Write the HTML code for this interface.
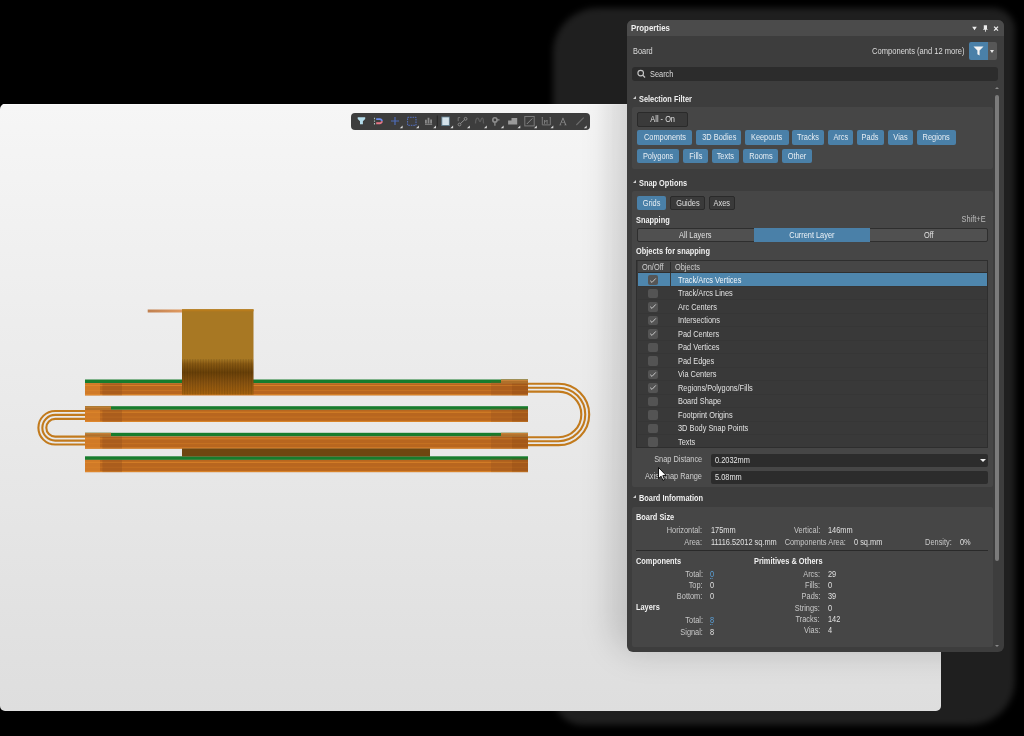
<!DOCTYPE html>
<html><head><meta charset="utf-8">
<style>
html,body{margin:0;padding:0;}
body{width:1024px;height:736px;overflow:hidden;position:relative;background:#000;font-family:"Liberation Sans",sans-serif;}
.a{position:absolute;}
#board{left:0;top:104px;width:941px;height:607px;border-radius:5px;background:linear-gradient(180deg,#f6f6f6 0%,#ececec 40%,#dedede 100%);overflow:hidden;}
#boardshade{left:612px;top:-40px;width:440px;height:590px;border-radius:30px;background:rgba(0,0,0,.15);filter:blur(15px);}
#pshadow{left:553px;top:8px;width:462px;height:717px;border-radius:45px 22px 45px 30px;background:#1f1f1f;filter:blur(3px);}
#panel{left:627px;top:20px;width:377px;height:632px;border-radius:6px;background:#3d3d3d;overflow:hidden;color:#dcdcdc;font-size:8.8px;}
.t{position:absolute;white-space:nowrap;line-height:10px;transform-origin:0 50%;}
.b{font-weight:bold;color:#f0f0f0;}
</style></head><body>
<div id="pshadow" class="a"></div>
<div id="board" class="a"><div class="a" style="left:0;top:0;width:941px;height:1px;background:#fcfcfc"></div><div id="boardshade" class="a"></div></div>
<svg class="a" style="left:0;top:0" width="1024" height="736" viewBox="0 0 1024 736">
<defs><linearGradient id="fg" x1="0" y1="0" x2="0" y2="1"><stop offset="0" stop-color="#a87823"/><stop offset=".587" stop-color="#a87823"/><stop offset=".64" stop-color="#8a5a12"/><stop offset=".74" stop-color="#6c4208"/><stop offset=".86" stop-color="#8a5410"/><stop offset="1" stop-color="#a8640e"/></linearGradient><linearGradient id="tl" x1="0" y1="0" x2="1" y2="0"><stop offset="0" stop-color="#c08050"/><stop offset="1" stop-color="#e09a60"/></linearGradient><pattern id="vs" width="1.6" height="10" patternUnits="userSpaceOnUse"><rect width=".8" height="10" fill="#000" opacity=".13"/></pattern></defs>
<rect x="147.7" y="309.5" width="34.5" height="3" fill="url(#tl)"/>
<rect x="85" y="379.5" width="443" height="3.6" fill="#177c2d"/>
<rect x="85" y="383.1" width="443" height="12.2" fill="#b8661f"/>
<rect x="85" y="385.0" width="443" height="1" fill="#e08a2a" opacity=".8"/>
<rect x="85" y="390.0" width="443" height=".8" fill="#d07a25" opacity=".7"/>
<rect x="85" y="394.1" width="443" height="1.2" fill="#d9842a"/>
<rect x="85" y="383.1" width="15" height="12.2" fill="#e48a2e" opacity=".55"/>
<rect x="102.4" y="383.1" width="19.6" height="12.2" fill="#8a4a1a" opacity=".3"/>
<rect x="491" y="381.5" width="21" height="13.8" fill="#8a4a1a" opacity=".25"/>
<rect x="512" y="381.5" width="16" height="13.8" fill="#7a3e10" opacity=".35"/>
<rect x="85" y="406.2" width="443" height="3.6" fill="#177c2d"/>
<rect x="85" y="409.8" width="443" height="12.2" fill="#b8661f"/>
<rect x="85" y="411.7" width="443" height="1" fill="#e08a2a" opacity=".8"/>
<rect x="85" y="416.7" width="443" height=".8" fill="#d07a25" opacity=".7"/>
<rect x="85" y="420.8" width="443" height="1.2" fill="#d9842a"/>
<rect x="85" y="409.8" width="15" height="12.2" fill="#e48a2e" opacity=".55"/>
<rect x="102.4" y="409.8" width="19.6" height="12.2" fill="#8a4a1a" opacity=".3"/>
<rect x="491" y="408.2" width="21" height="13.8" fill="#8a4a1a" opacity=".25"/>
<rect x="512" y="408.2" width="16" height="13.8" fill="#7a3e10" opacity=".35"/>
<rect x="85" y="432.8" width="443" height="3.6" fill="#177c2d"/>
<rect x="85" y="436.40000000000003" width="443" height="12.2" fill="#b8661f"/>
<rect x="85" y="438.3" width="443" height="1" fill="#e08a2a" opacity=".8"/>
<rect x="85" y="443.3" width="443" height=".8" fill="#d07a25" opacity=".7"/>
<rect x="85" y="447.40000000000003" width="443" height="1.2" fill="#d9842a"/>
<rect x="85" y="436.40000000000003" width="15" height="12.2" fill="#e48a2e" opacity=".55"/>
<rect x="102.4" y="436.40000000000003" width="19.6" height="12.2" fill="#8a4a1a" opacity=".3"/>
<rect x="491" y="434.8" width="21" height="13.8" fill="#8a4a1a" opacity=".25"/>
<rect x="512" y="434.8" width="16" height="13.8" fill="#7a3e10" opacity=".35"/>
<rect x="85" y="456.3" width="443" height="3.6" fill="#177c2d"/>
<rect x="85" y="459.90000000000003" width="443" height="12.2" fill="#b8661f"/>
<rect x="85" y="461.8" width="443" height="1" fill="#e08a2a" opacity=".8"/>
<rect x="85" y="466.8" width="443" height=".8" fill="#d07a25" opacity=".7"/>
<rect x="85" y="470.90000000000003" width="443" height="1.2" fill="#d9842a"/>
<rect x="85" y="459.90000000000003" width="15" height="12.2" fill="#e48a2e" opacity=".55"/>
<rect x="102.4" y="459.90000000000003" width="19.6" height="12.2" fill="#8a4a1a" opacity=".3"/>
<rect x="491" y="458.3" width="21" height="13.8" fill="#8a4a1a" opacity=".25"/>
<rect x="512" y="458.3" width="16" height="13.8" fill="#7a3e10" opacity=".35"/>
<rect x="182" y="309.3" width="71.5" height="85.3" fill="url(#fg)"/>
<rect x="182" y="309.3" width="71.5" height="2" fill="#b87c1c"/>
<rect x="182" y="359" width="71.5" height="35.6" fill="url(#vs)"/>
<rect x="182" y="448.5" width="248" height="8" fill="#6e4610"/>
<rect x="85" y="406.2" width="26" height="3.8" fill="#b0702a"/>
<rect x="85" y="406.5" width="26" height="1.2" fill="#d08a40" opacity=".7"/>
<rect x="85" y="432.8" width="26" height="3.8" fill="#b0702a"/>
<rect x="85" y="433.1" width="26" height="1.2" fill="#d08a40" opacity=".7"/>
<rect x="501" y="379.5" width="27" height="3.8" fill="#b0702a"/>
<rect x="501" y="379.8" width="27" height="1.2" fill="#d08a40" opacity=".7"/>
<rect x="501" y="432.8" width="27" height="3.8" fill="#b0702a"/>
<rect x="501" y="433.1" width="27" height="1.2" fill="#d08a40" opacity=".7"/>
<path d="M528 383.75 H558.5 A30.7 30.7 0 0 1 558.5 445.15 H528" stroke="#c27a1c" stroke-width="2.1" fill="none"/>
<path d="M528 387.7 H558.5 A26.75 26.75 0 0 1 558.5 441.2 H528" stroke="#c27a1c" stroke-width="2.1" fill="none"/>
<path d="M528 391.65 H558.5 A22.799999999999997 22.799999999999997 0 0 1 558.5 437.25 H528" stroke="#c27a1c" stroke-width="2.1" fill="none"/>
<path d="M85 410.95 H55.2 A16.8 16.8 0 0 0 55.2 444.55 H85" stroke="#c27a1c" stroke-width="2.1" fill="none"/>
<path d="M85 414.9 H55.2 A12.850000000000001 12.850000000000001 0 0 0 55.2 440.6 H85" stroke="#c27a1c" stroke-width="2.1" fill="none"/>
<path d="M85 418.85 H55.2 A8.9 8.9 0 0 0 55.2 436.65 H85" stroke="#c27a1c" stroke-width="2.1" fill="none"/>
</svg>
<div class="a" style="left:351px;top:113px;width:239px;height:16.5px;background:#3d3d3d;border-radius:4px;"></div>
<svg class="a" style="left:0;top:0" width="1024" height="736" viewBox="0 0 1024 736"><defs><filter id="gl"><feGaussianBlur stdDeviation=".6"/></filter></defs><path d="M357.7 117.3h7.5v1.6l-2.3 2.4v3h-2.9v-3l-2.3-2.4z" fill="#b4dcea"/><path d="M376.2 119.1h3.6a2.05 2.05 0 0 1 2.05 2.05" stroke="#6a8ae8" stroke-width="1.9" fill="none"/><path d="M381.85 121.15a2.05 2.05 0 0 1 -2.05 2.05h-3.6" stroke="#e67686" stroke-width="1.9" fill="none"/><path d="M374.5 117.8v1.4M374.5 120.4v1.4M374.5 123v1.4" stroke="#a8c0b8" stroke-width="1.1"/><path d="M391 121h8M395 117v8" stroke="#4e6cb8" stroke-width="1.2"/><rect x="407.6" y="117.3" width="8.4" height="8" stroke="#5470c0" stroke-width="1" fill="none" stroke-dasharray="1.6 .9"/><path d="M425 124.3h7.2" stroke="#8a8a8a" stroke-width="1"/><path d="M425.9 123.4v-3.6M428.5 123.4v-5.6M431.1 123.4v-4" stroke="#8a8a8a" stroke-width="1.8"/><path d="M437.3 115.5v11" stroke="#262626" stroke-width="1"/><rect x="441.3" y="116.6" width="8.5" height="9.3" fill="#7fb0cc" opacity=".6" filter="url(#gl)"/><rect x="442.3" y="117.4" width="6.6" height="7.6" fill="#d4e2ea"/><path d="M460.4 123.6l4.3-4" stroke="#8a8a8a" stroke-width="1"/><circle cx="459.5" cy="124.5" r="1.4" stroke="#8a8a8a" fill="none"/><circle cx="465.6" cy="118.8" r="1.4" stroke="#8a8a8a" fill="none"/><path d="M458.2 121.2v-3.6h2" stroke="#7a7a7a" stroke-width=".9" fill="none"/><path d="M475.5 123.5c0-4 1.2-5.3 2.3-5.3s1.3 3.5 2.2 3.5 1.1-3.5 2.2-3.5 1.3 1.8 1.3 5.3" stroke="#5c5c5c" stroke-width="1.3" fill="none"/><circle cx="494.9" cy="119.9" r="2.1" fill="none" stroke="#8e8e8e" stroke-width="1.6"/><path d="M494.9 122v3.8M497 119.9h2.5" stroke="#8e8e8e" stroke-width="1.3"/><path d="M508.1 124.6v-4.1h3.4v-2.6h5.7v6.7z" fill="#9a9a9a"/><rect x="524.8" y="116.5" width="9.4" height="9.4" fill="none" stroke="#7a7a7a" stroke-width="1"/><path d="M526.8 124l5.5-5.5" stroke="#8a8a8a" stroke-width="1"/><path d="M542.3 117.6v7.3h8v-7.3M544.5 123.8v-3.8l1.3 1.6 1.3-1.6v3.8" stroke="#7a7a7a" stroke-width="1" fill="none"/><path d="M541.7 117.6h1.3M549.6 117.6h1.3" stroke="#7a7a7a" stroke-width="1"/><path d="M559.2 125.3h2.2v-.5h-.8l.8-2.2h2.9l.8 2.2h-.8v.5h2.4v-.5h-.5l-2.9-7.1h-.7l-2.8 7.1h-.6z M561.9 121.9l1.1-3 1.1 3z" fill="#8c8c8c" fill-rule="evenodd"/><path d="M576.3 125l7.4-7.4" stroke="#6c6c6c" stroke-width="1.1"/><path d="M399.8 128.3h2.8v-2.8z" fill="#d8d8d8"/><path d="M416.1 128.3h2.8v-2.8z" fill="#d8d8d8"/><path d="M433.2 128.3h2.8v-2.8z" fill="#d8d8d8"/><path d="M450.3 128.3h2.8v-2.8z" fill="#d8d8d8"/><path d="M467.0 128.3h2.8v-2.8z" fill="#d8d8d8"/><path d="M484.0 128.3h2.8v-2.8z" fill="#d8d8d8"/><path d="M500.8 128.3h2.8v-2.8z" fill="#d8d8d8"/><path d="M517.5 128.3h2.8v-2.8z" fill="#d8d8d8"/><path d="M534.0 128.3h2.8v-2.8z" fill="#d8d8d8"/><path d="M550.5 128.3h2.8v-2.8z" fill="#d8d8d8"/><path d="M583.9 128.3h2.8v-2.8z" fill="#d8d8d8"/></svg>
<div id="panel" class="a">
<div class="a" style="left:0.00px;top:0.00px;width:377.00px;height:16.00px;background:#4b4b4b;"></div>
<div class="t b" style="top:3.43px;font-size:9.6px;transform:scaleX(0.82);left:4.00px;">Properties</div>
<svg class="a" style="left:343px;top:4px" width="32" height="10" viewBox="970 24 32 10"><path d="M972.2 26.8h4.6l-2.3 3.4z" fill="#ececec"/><path d="M983.8 25.2h3.2v3.6l.9.9h-2.1v2h-.8v-2h-2.1l.9-.9z" fill="#ececec"/><path d="M994.1 26.6l3.9 4M998 26.6l-3.9 4" stroke="#ececec" stroke-width="1.3"/></svg>
<div class="t " style="top:26.39px;font-size:8.8px;transform:scaleX(0.84);left:6.00px;">Board</div>
<div class="t " style="top:26.39px;font-size:8.8px;transform:scaleX(0.86);right:39.50px;transform-origin:100% 50%;">Components (and 12 more)</div>
<div class="a" style="left:342.00px;top:22.30px;width:19.00px;height:17.70px;background:#4a80a8;border-radius:2px 0 0 2px;"></div>
<svg class="a" style="left:346px;top:26px" width="11" height="10" viewBox="0 0 11 10"><path d="M0.5 0.5h10L6.6 4.6V9.5L4.4 8.3V4.6z" fill="#f4f4f4"/></svg>
<div class="a" style="left:361.00px;top:22.30px;width:9.00px;height:17.70px;background:#575757;border-radius:0 2px 2px 0;"></div>
<div class="a" style="left:363px;top:30px;width:0;height:0;border-left:2.5px solid transparent;border-right:2.5px solid transparent;border-top:3px solid #e8e8e8;"></div>
<div class="a" style="left:5.00px;top:46.80px;width:366.00px;height:14.20px;background:#2c2c2c;border-radius:3px;"></div>
<svg class="a" style="left:9px;top:49px" width="10" height="10" viewBox="0 0 10 10"><circle cx="4.7" cy="4.1" r="2.8" stroke="#c4c4c4" stroke-width="1.15" fill="none"/><path d="M6.7 6.1L9 8.5" stroke="#c4c4c4" stroke-width="1.3"/></svg>
<div class="t " style="top:48.89px;font-size:8.8px;transform:scaleX(0.84);left:23.00px;">Search</div>
<div class="a" style="left:6px;top:76.30px;width:0;height:0;border-left:3.5px solid transparent;border-bottom:3.5px solid #d0d0d0;"></div>
<div class="t b" style="top:74.39px;font-size:8.8px;transform:scaleX(0.84);left:11.70px;">Selection Filter</div>
<div class="a" style="left:5.00px;top:86.70px;width:360.50px;height:62.50px;background:#464646;border-radius:2px;"></div>
<div class="a" style="left:10.00px;top:91.50px;width:50.50px;height:15.00px;background:#3a3a3a;border:1px solid #2a2a2a;box-sizing:border-box;border-radius:2px;"></div>
<div class="a" style="left:10.00px;top:91.50px;width:50.50px;height:15.00px;line-height:15.00px;text-align:center;color:#e0e0e0;font-size:8.8px;"><span style="display:inline-block;transform:scaleX(0.84);white-space:nowrap">All - On</span></div>
<div class="a" style="left:10.00px;top:110.40px;width:55.00px;height:14.30px;background:#4a80a8;border-radius:2px;"></div>
<div class="a" style="left:10.00px;top:110.40px;width:55.00px;height:14.30px;line-height:14.30px;text-align:center;color:#e8eef4;font-size:8.8px;"><span style="display:inline-block;transform:scaleX(0.84);white-space:nowrap">Components</span></div>
<div class="a" style="left:69.30px;top:110.40px;width:45.00px;height:14.30px;background:#4a80a8;border-radius:2px;"></div>
<div class="a" style="left:69.30px;top:110.40px;width:45.00px;height:14.30px;line-height:14.30px;text-align:center;color:#e8eef4;font-size:8.8px;"><span style="display:inline-block;transform:scaleX(0.84);white-space:nowrap">3D Bodies</span></div>
<div class="a" style="left:118.00px;top:110.40px;width:43.50px;height:14.30px;background:#4a80a8;border-radius:2px;"></div>
<div class="a" style="left:118.00px;top:110.40px;width:43.50px;height:14.30px;line-height:14.30px;text-align:center;color:#e8eef4;font-size:8.8px;"><span style="display:inline-block;transform:scaleX(0.84);white-space:nowrap">Keepouts</span></div>
<div class="a" style="left:165.40px;top:110.40px;width:31.60px;height:14.30px;background:#4a80a8;border-radius:2px;"></div>
<div class="a" style="left:165.40px;top:110.40px;width:31.60px;height:14.30px;line-height:14.30px;text-align:center;color:#e8eef4;font-size:8.8px;"><span style="display:inline-block;transform:scaleX(0.84);white-space:nowrap">Tracks</span></div>
<div class="a" style="left:201.10px;top:110.40px;width:24.80px;height:14.30px;background:#4a80a8;border-radius:2px;"></div>
<div class="a" style="left:201.10px;top:110.40px;width:24.80px;height:14.30px;line-height:14.30px;text-align:center;color:#e8eef4;font-size:8.8px;"><span style="display:inline-block;transform:scaleX(0.84);white-space:nowrap">Arcs</span></div>
<div class="a" style="left:230.00px;top:110.40px;width:27.00px;height:14.30px;background:#4a80a8;border-radius:2px;"></div>
<div class="a" style="left:230.00px;top:110.40px;width:27.00px;height:14.30px;line-height:14.30px;text-align:center;color:#e8eef4;font-size:8.8px;"><span style="display:inline-block;transform:scaleX(0.84);white-space:nowrap">Pads</span></div>
<div class="a" style="left:261.20px;top:110.40px;width:24.60px;height:14.30px;background:#4a80a8;border-radius:2px;"></div>
<div class="a" style="left:261.20px;top:110.40px;width:24.60px;height:14.30px;line-height:14.30px;text-align:center;color:#e8eef4;font-size:8.8px;"><span style="display:inline-block;transform:scaleX(0.84);white-space:nowrap">Vias</span></div>
<div class="a" style="left:289.90px;top:110.40px;width:39.00px;height:14.30px;background:#4a80a8;border-radius:2px;"></div>
<div class="a" style="left:289.90px;top:110.40px;width:39.00px;height:14.30px;line-height:14.30px;text-align:center;color:#e8eef4;font-size:8.8px;"><span style="display:inline-block;transform:scaleX(0.84);white-space:nowrap">Regions</span></div>
<div class="a" style="left:10.00px;top:128.60px;width:42.30px;height:14.30px;background:#4a80a8;border-radius:2px;"></div>
<div class="a" style="left:10.00px;top:128.60px;width:42.30px;height:14.30px;line-height:14.30px;text-align:center;color:#e8eef4;font-size:8.8px;"><span style="display:inline-block;transform:scaleX(0.84);white-space:nowrap">Polygons</span></div>
<div class="a" style="left:56.20px;top:128.60px;width:24.50px;height:14.30px;background:#4a80a8;border-radius:2px;"></div>
<div class="a" style="left:56.20px;top:128.60px;width:24.50px;height:14.30px;line-height:14.30px;text-align:center;color:#e8eef4;font-size:8.8px;"><span style="display:inline-block;transform:scaleX(0.84);white-space:nowrap">Fills</span></div>
<div class="a" style="left:84.60px;top:128.60px;width:27.70px;height:14.30px;background:#4a80a8;border-radius:2px;"></div>
<div class="a" style="left:84.60px;top:128.60px;width:27.70px;height:14.30px;line-height:14.30px;text-align:center;color:#e8eef4;font-size:8.8px;"><span style="display:inline-block;transform:scaleX(0.84);white-space:nowrap">Texts</span></div>
<div class="a" style="left:116.40px;top:128.60px;width:34.40px;height:14.30px;background:#4a80a8;border-radius:2px;"></div>
<div class="a" style="left:116.40px;top:128.60px;width:34.40px;height:14.30px;line-height:14.30px;text-align:center;color:#e8eef4;font-size:8.8px;"><span style="display:inline-block;transform:scaleX(0.84);white-space:nowrap">Rooms</span></div>
<div class="a" style="left:154.70px;top:128.60px;width:30.80px;height:14.30px;background:#4a80a8;border-radius:2px;"></div>
<div class="a" style="left:154.70px;top:128.60px;width:30.80px;height:14.30px;line-height:14.30px;text-align:center;color:#e8eef4;font-size:8.8px;"><span style="display:inline-block;transform:scaleX(0.84);white-space:nowrap">Other</span></div>
<div class="a" style="left:6px;top:160.00px;width:0;height:0;border-left:3.5px solid transparent;border-bottom:3.5px solid #d0d0d0;"></div>
<div class="t b" style="top:158.09px;font-size:8.8px;transform:scaleX(0.84);left:11.70px;">Snap Options</div>
<div class="a" style="left:5.00px;top:171.30px;width:360.50px;height:296.20px;background:#464646;border-radius:2px;"></div>
<div class="a" style="left:9.80px;top:175.90px;width:29.20px;height:14.30px;background:#4a80a8;border-radius:2px;"></div>
<div class="a" style="left:9.80px;top:175.90px;width:29.20px;height:14.30px;line-height:14.30px;text-align:center;color:#e8eef4;font-size:8.8px;"><span style="display:inline-block;transform:scaleX(0.84);white-space:nowrap">Grids</span></div>
<div class="a" style="left:42.60px;top:175.90px;width:35.90px;height:14.30px;background:#3a3a3a;border:1px solid #2a2a2a;box-sizing:border-box;border-radius:2px;"></div>
<div class="a" style="left:42.60px;top:175.90px;width:35.90px;height:14.30px;line-height:14.30px;text-align:center;color:#e0e0e0;font-size:8.8px;"><span style="display:inline-block;transform:scaleX(0.84);white-space:nowrap">Guides</span></div>
<div class="a" style="left:81.60px;top:175.90px;width:26.80px;height:14.30px;background:#3a3a3a;border:1px solid #2a2a2a;box-sizing:border-box;border-radius:2px;"></div>
<div class="a" style="left:81.60px;top:175.90px;width:26.80px;height:14.30px;line-height:14.30px;text-align:center;color:#e0e0e0;font-size:8.8px;"><span style="display:inline-block;transform:scaleX(0.84);white-space:nowrap">Axes</span></div>
<div class="t b" style="top:194.79px;font-size:8.8px;transform:scaleX(0.84);left:9.00px;">Snapping</div>
<div class="t " style="top:194.39px;font-size:8.8px;transform:scaleX(0.84);color:#bdbdbd;right:18.00px;transform-origin:100% 50%;">Shift+E</div>
<div class="a" style="left:10.00px;top:207.70px;width:351.00px;height:14.70px;background:#505050;border:1px solid #2e2e2e;box-sizing:border-box;border-radius:2px;"></div>
<div class="a" style="left:127.30px;top:207.70px;width:116.20px;height:14.70px;background:#4a80a8;"></div>
<div class="a" style="left:10.00px;top:207.70px;width:117.30px;height:14.70px;line-height:14.70px;text-align:center;color:#e0e0e0;font-size:8.8px;"><span style="display:inline-block;transform:scaleX(0.84);white-space:nowrap">All Layers</span></div>
<div class="a" style="left:127.30px;top:207.70px;width:116.20px;height:14.70px;line-height:14.70px;text-align:center;color:#eef3f8;font-size:8.8px;"><span style="display:inline-block;transform:scaleX(0.84);white-space:nowrap">Current Layer</span></div>
<div class="a" style="left:243.50px;top:207.70px;width:117.50px;height:14.70px;line-height:14.70px;text-align:center;color:#e0e0e0;font-size:8.8px;"><span style="display:inline-block;transform:scaleX(0.84);white-space:nowrap">Off</span></div>
<div class="t b" style="top:226.29px;font-size:8.8px;transform:scaleX(0.84);left:9.00px;">Objects for snapping</div>
<div class="a" style="left:9.00px;top:239.50px;width:352.00px;height:188.90px;background:#393939;border:1px solid #2e2e2e;box-sizing:border-box;"></div>
<div class="a" style="left:10.60px;top:240.50px;width:349.40px;height:12.20px;background:#464646;border-bottom:1px solid #2f2f2f;box-sizing:border-box;"></div>
<div class="a" style="left:43.00px;top:241.50px;width:1.00px;height:10.00px;background:#2c2c2c;"></div>
<div class="t " style="top:241.59px;font-size:8.8px;transform:scaleX(0.84);color:#d0d0d0;left:14.60px;">On/Off</div>
<div class="t " style="top:241.59px;font-size:8.8px;transform:scaleX(0.84);color:#d0d0d0;left:47.80px;">Objects</div>
<div class="a" style="left:10.60px;top:253.00px;width:32.40px;height:12.99px;background:#4e86ad;"></div>
<div class="a" style="left:44.00px;top:253.00px;width:316.00px;height:12.99px;background:#4e86ad;"></div>
<div class="a" style="left:20.50px;top:255.20px;width:10.30px;height:9.70px;background:#555555;border-radius:2px;"></div>
<svg class="a" style="left:21.50px;top:256.50px" width="8" height="7" viewBox="0 0 8 7"><path d="M1.2 3.7L3 5.4L6.8 1.4" stroke="#d4d4d4" stroke-width=".9" fill="none"/></svg>
<div class="t " style="top:254.89px;font-size:8.8px;transform:scaleX(0.84);color:#f2f6fa;left:50.70px;">Track/Arcs Vertices</div>
<div class="a" style="left:10.60px;top:265.99px;width:349.40px;height:1.00px;background:#363636;"></div>
<div class="a" style="left:20.50px;top:268.69px;width:10.30px;height:9.70px;background:#545454;border-radius:2px;"></div>
<div class="t " style="top:268.38px;font-size:8.8px;transform:scaleX(0.84);color:#e2e2e2;left:50.70px;">Track/Arcs Lines</div>
<div class="a" style="left:10.60px;top:279.48px;width:349.40px;height:1.00px;background:#363636;"></div>
<div class="a" style="left:20.50px;top:282.18px;width:10.30px;height:9.70px;background:#545454;border-radius:2px;"></div>
<svg class="a" style="left:21.50px;top:283.48px" width="8" height="7" viewBox="0 0 8 7"><path d="M1.2 3.7L3 5.4L6.8 1.4" stroke="#d4d4d4" stroke-width=".9" fill="none"/></svg>
<div class="t " style="top:281.87px;font-size:8.8px;transform:scaleX(0.84);color:#e2e2e2;left:50.70px;">Arc Centers</div>
<div class="a" style="left:10.60px;top:292.97px;width:349.40px;height:1.00px;background:#363636;"></div>
<div class="a" style="left:20.50px;top:295.67px;width:10.30px;height:9.70px;background:#545454;border-radius:2px;"></div>
<svg class="a" style="left:21.50px;top:296.97px" width="8" height="7" viewBox="0 0 8 7"><path d="M1.2 3.7L3 5.4L6.8 1.4" stroke="#d4d4d4" stroke-width=".9" fill="none"/></svg>
<div class="t " style="top:295.36px;font-size:8.8px;transform:scaleX(0.84);color:#e2e2e2;left:50.70px;">Intersections</div>
<div class="a" style="left:10.60px;top:306.46px;width:349.40px;height:1.00px;background:#363636;"></div>
<div class="a" style="left:20.50px;top:309.16px;width:10.30px;height:9.70px;background:#545454;border-radius:2px;"></div>
<svg class="a" style="left:21.50px;top:310.46px" width="8" height="7" viewBox="0 0 8 7"><path d="M1.2 3.7L3 5.4L6.8 1.4" stroke="#d4d4d4" stroke-width=".9" fill="none"/></svg>
<div class="t " style="top:308.85px;font-size:8.8px;transform:scaleX(0.84);color:#e2e2e2;left:50.70px;">Pad Centers</div>
<div class="a" style="left:10.60px;top:319.95px;width:349.40px;height:1.00px;background:#363636;"></div>
<div class="a" style="left:20.50px;top:322.65px;width:10.30px;height:9.70px;background:#545454;border-radius:2px;"></div>
<div class="t " style="top:322.34px;font-size:8.8px;transform:scaleX(0.84);color:#e2e2e2;left:50.70px;">Pad Vertices</div>
<div class="a" style="left:10.60px;top:333.44px;width:349.40px;height:1.00px;background:#363636;"></div>
<div class="a" style="left:20.50px;top:336.14px;width:10.30px;height:9.70px;background:#545454;border-radius:2px;"></div>
<div class="t " style="top:335.83px;font-size:8.8px;transform:scaleX(0.84);color:#e2e2e2;left:50.70px;">Pad Edges</div>
<div class="a" style="left:10.60px;top:346.93px;width:349.40px;height:1.00px;background:#363636;"></div>
<div class="a" style="left:20.50px;top:349.63px;width:10.30px;height:9.70px;background:#545454;border-radius:2px;"></div>
<svg class="a" style="left:21.50px;top:350.93px" width="8" height="7" viewBox="0 0 8 7"><path d="M1.2 3.7L3 5.4L6.8 1.4" stroke="#d4d4d4" stroke-width=".9" fill="none"/></svg>
<div class="t " style="top:349.32px;font-size:8.8px;transform:scaleX(0.84);color:#e2e2e2;left:50.70px;">Via Centers</div>
<div class="a" style="left:10.60px;top:360.42px;width:349.40px;height:1.00px;background:#363636;"></div>
<div class="a" style="left:20.50px;top:363.12px;width:10.30px;height:9.70px;background:#545454;border-radius:2px;"></div>
<svg class="a" style="left:21.50px;top:364.42px" width="8" height="7" viewBox="0 0 8 7"><path d="M1.2 3.7L3 5.4L6.8 1.4" stroke="#d4d4d4" stroke-width=".9" fill="none"/></svg>
<div class="t " style="top:362.81px;font-size:8.8px;transform:scaleX(0.84);color:#e2e2e2;left:50.70px;">Regions/Polygons/Fills</div>
<div class="a" style="left:10.60px;top:373.91px;width:349.40px;height:1.00px;background:#363636;"></div>
<div class="a" style="left:20.50px;top:376.61px;width:10.30px;height:9.70px;background:#545454;border-radius:2px;"></div>
<div class="t " style="top:376.30px;font-size:8.8px;transform:scaleX(0.84);color:#e2e2e2;left:50.70px;">Board Shape</div>
<div class="a" style="left:10.60px;top:387.40px;width:349.40px;height:1.00px;background:#363636;"></div>
<div class="a" style="left:20.50px;top:390.10px;width:10.30px;height:9.70px;background:#545454;border-radius:2px;"></div>
<div class="t " style="top:389.79px;font-size:8.8px;transform:scaleX(0.84);color:#e2e2e2;left:50.70px;">Footprint Origins</div>
<div class="a" style="left:10.60px;top:400.89px;width:349.40px;height:1.00px;background:#363636;"></div>
<div class="a" style="left:20.50px;top:403.59px;width:10.30px;height:9.70px;background:#545454;border-radius:2px;"></div>
<div class="t " style="top:403.28px;font-size:8.8px;transform:scaleX(0.84);color:#e2e2e2;left:50.70px;">3D Body Snap Points</div>
<div class="a" style="left:10.60px;top:414.38px;width:349.40px;height:1.00px;background:#363636;"></div>
<div class="a" style="left:20.50px;top:417.08px;width:10.30px;height:9.70px;background:#545454;border-radius:2px;"></div>
<div class="t " style="top:416.77px;font-size:8.8px;transform:scaleX(0.84);color:#e2e2e2;left:50.70px;">Texts</div>
<div class="t " style="top:434.09px;font-size:8.8px;transform:scaleX(0.84);color:#cfcfcf;right:302.00px;transform-origin:100% 50%;">Snap Distance</div>
<div class="a" style="left:83.50px;top:433.60px;width:277.50px;height:13.30px;background:#2c2c2c;border-radius:2px;"></div>
<div class="t " style="top:434.89px;font-size:8.8px;transform:scaleX(0.84);color:#e6e6e6;left:87.50px;">0.2032mm</div>
<div class="a" style="left:352.5px;top:438.5px;width:0;height:0;border-left:3px solid transparent;border-right:3px solid transparent;border-top:3.5px solid #f0f0f0;"></div>
<div class="t " style="top:451.29px;font-size:8.8px;transform:scaleX(0.84);color:#cfcfcf;right:302.00px;transform-origin:100% 50%;">Axis Snap Range</div>
<div class="a" style="left:83.50px;top:450.50px;width:277.50px;height:13.25px;background:#2c2c2c;border-radius:2px;"></div>
<div class="t " style="top:451.89px;font-size:8.8px;transform:scaleX(0.84);color:#e6e6e6;left:87.50px;">5.08mm</div>
<div class="a" style="left:6px;top:474.80px;width:0;height:0;border-left:3.5px solid transparent;border-bottom:3.5px solid #d0d0d0;"></div>
<div class="t b" style="top:472.89px;font-size:8.8px;transform:scaleX(0.84);left:11.70px;">Board Information</div>
<div class="a" style="left:5.00px;top:486.50px;width:360.50px;height:140.50px;background:#464646;border-radius:2px;"></div>
<div class="t b" style="top:492.09px;font-size:8.8px;transform:scaleX(0.84);left:9.00px;">Board Size</div>
<div class="t " style="top:505.09px;font-size:8.8px;transform:scaleX(0.84);color:#c8c8c8;right:301.80px;transform-origin:100% 50%;">Horizontal:</div>
<div class="t " style="top:505.09px;font-size:8.8px;transform:scaleX(0.84);color:#e0e0e0;left:83.60px;">175mm</div>
<div class="t " style="top:505.09px;font-size:8.8px;transform:scaleX(0.84);color:#c8c8c8;right:184.00px;transform-origin:100% 50%;">Vertical:</div>
<div class="t " style="top:505.09px;font-size:8.8px;transform:scaleX(0.84);color:#e0e0e0;left:201.30px;">146mm</div>
<div class="t " style="top:516.79px;font-size:8.8px;transform:scaleX(0.84);color:#c8c8c8;right:301.80px;transform-origin:100% 50%;">Area:</div>
<div class="t " style="top:516.79px;font-size:8.8px;transform:scaleX(0.84);color:#e0e0e0;left:83.60px;">11116.52012 sq.mm</div>
<div class="t " style="top:516.79px;font-size:8.8px;transform:scaleX(0.84);color:#c8c8c8;right:157.70px;transform-origin:100% 50%;">Components Area:</div>
<div class="t " style="top:516.79px;font-size:8.8px;transform:scaleX(0.84);color:#e0e0e0;left:227.10px;">0 sq.mm</div>
<div class="t " style="top:516.79px;font-size:8.8px;transform:scaleX(0.84);color:#c8c8c8;right:52.20px;transform-origin:100% 50%;">Density:</div>
<div class="t " style="top:516.79px;font-size:8.8px;transform:scaleX(0.84);color:#e0e0e0;left:332.70px;">0%</div>
<div class="a" style="left:9.00px;top:530.00px;width:352.00px;height:1.00px;background:#2a2a2a;"></div>
<div class="t b" style="top:535.89px;font-size:8.8px;transform:scaleX(0.84);left:9.00px;">Components</div>
<div class="t b" style="top:535.89px;font-size:8.8px;transform:scaleX(0.84);left:127.30px;">Primitives &amp; Others</div>
<div class="t " style="top:548.69px;font-size:8.8px;transform:scaleX(0.84);color:#c8c8c8;right:301.40px;transform-origin:100% 50%;">Total:</div>
<div class="t " style="top:548.69px;font-size:8.8px;transform:scaleX(0.84);color:#5aa0d8;left:83.10px;text-decoration:underline dotted;">0</div>
<div class="t " style="top:559.99px;font-size:8.8px;transform:scaleX(0.84);color:#c8c8c8;right:301.40px;transform-origin:100% 50%;">Top:</div>
<div class="t " style="top:559.99px;font-size:8.8px;transform:scaleX(0.84);color:#e0e0e0;left:83.10px;">0</div>
<div class="t " style="top:571.29px;font-size:8.8px;transform:scaleX(0.84);color:#c8c8c8;right:301.40px;transform-origin:100% 50%;">Bottom:</div>
<div class="t " style="top:571.29px;font-size:8.8px;transform:scaleX(0.84);color:#e0e0e0;left:83.10px;">0</div>
<div class="t b" style="top:582.09px;font-size:8.8px;transform:scaleX(0.84);left:9.00px;">Layers</div>
<div class="t " style="top:595.39px;font-size:8.8px;transform:scaleX(0.84);color:#c8c8c8;right:301.40px;transform-origin:100% 50%;">Total:</div>
<div class="t " style="top:595.39px;font-size:8.8px;transform:scaleX(0.84);color:#5aa0d8;left:83.10px;text-decoration:underline dotted;">8</div>
<div class="t " style="top:606.69px;font-size:8.8px;transform:scaleX(0.84);color:#c8c8c8;right:301.40px;transform-origin:100% 50%;">Signal:</div>
<div class="t " style="top:606.69px;font-size:8.8px;transform:scaleX(0.84);color:#e0e0e0;left:83.10px;">8</div>
<div class="t " style="top:548.69px;font-size:8.8px;transform:scaleX(0.84);color:#c8c8c8;right:184.00px;transform-origin:100% 50%;">Arcs:</div>
<div class="t " style="top:548.69px;font-size:8.8px;transform:scaleX(0.84);color:#e0e0e0;left:200.90px;">29</div>
<div class="t " style="top:559.99px;font-size:8.8px;transform:scaleX(0.84);color:#c8c8c8;right:184.00px;transform-origin:100% 50%;">Fills:</div>
<div class="t " style="top:559.99px;font-size:8.8px;transform:scaleX(0.84);color:#e0e0e0;left:200.90px;">0</div>
<div class="t " style="top:571.29px;font-size:8.8px;transform:scaleX(0.84);color:#c8c8c8;right:184.00px;transform-origin:100% 50%;">Pads:</div>
<div class="t " style="top:571.29px;font-size:8.8px;transform:scaleX(0.84);color:#e0e0e0;left:200.90px;">39</div>
<div class="t " style="top:582.59px;font-size:8.8px;transform:scaleX(0.84);color:#c8c8c8;right:184.00px;transform-origin:100% 50%;">Strings:</div>
<div class="t " style="top:582.59px;font-size:8.8px;transform:scaleX(0.84);color:#e0e0e0;left:200.90px;">0</div>
<div class="t " style="top:593.89px;font-size:8.8px;transform:scaleX(0.84);color:#c8c8c8;right:184.00px;transform-origin:100% 50%;">Tracks:</div>
<div class="t " style="top:593.89px;font-size:8.8px;transform:scaleX(0.84);color:#e0e0e0;left:200.90px;">142</div>
<div class="t " style="top:605.19px;font-size:8.8px;transform:scaleX(0.84);color:#c8c8c8;right:184.00px;transform-origin:100% 50%;">Vias:</div>
<div class="t " style="top:605.19px;font-size:8.8px;transform:scaleX(0.84);color:#e0e0e0;left:200.90px;">4</div>
<div class="a" style="left:368.00px;top:75.00px;width:4.00px;height:466.00px;background:#7b7b7b;border-radius:2px;"></div>
<div class="a" style="left:368px;top:66.5px;width:0;height:0;border-left:2px solid transparent;border-right:2px solid transparent;border-bottom:2px solid #8a8a8a;"></div>
<div class="a" style="left:368px;top:625px;width:0;height:0;border-left:2px solid transparent;border-right:2px solid transparent;border-top:2px solid #8a8a8a;"></div>
<svg class="a" style="left:30.600000000000023px;top:446.8px" width="10" height="15" viewBox="0 0 10 15"><path d="M.5 .5V11.6L3.1 9.2 4.9 13.3 6.6 12.6 4.8 8.6H8.3z" fill="#fff" stroke="#000" stroke-width=".9"/></svg>
</div>
</body></html>
